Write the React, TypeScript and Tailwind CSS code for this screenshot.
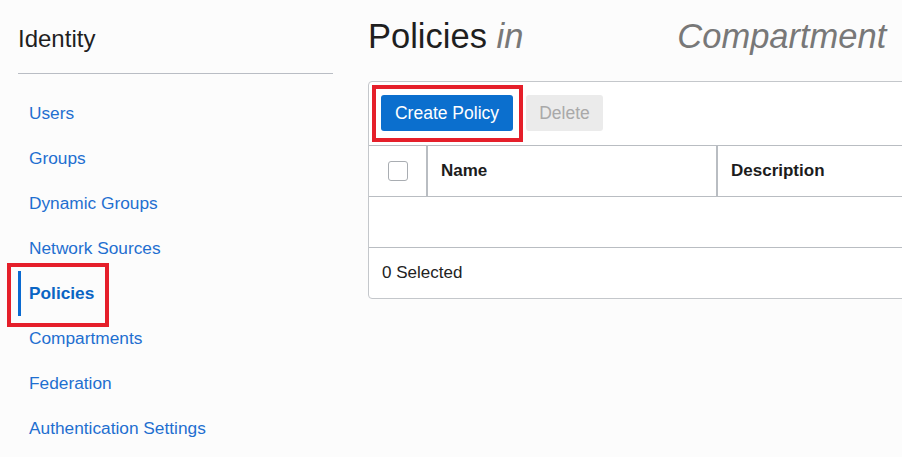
const navItems = [
  "Users",
  "Groups",
  "Dynamic Groups",
  "Network Sources",
  "Policies",
  "Compartments",
  "Federation",
  "Authentication Settings",
];

export default function App() {
  return (
    <div className="flex h-[457px] w-[902px] overflow-hidden bg-[#fcfcfc] font-['Liberation_Sans',Arial,sans-serif]">
      {/* Sidebar */}
      <aside className="ml-[18px] w-[315px] shrink-0">
        <h2 className="pt-[25px] text-[24px] leading-[28px] text-[#1f1f1f]">Identity</h2>
        <div className="mt-[20px] h-px bg-[#b9bdc4]" />
        <ul className="pt-[17px]">
          {navItems.map((item) => {
            const active = item === "Policies";
            return (
              <li key={item} className="relative flex h-[45px] items-center">
                {active ? (
                  <>
                    <span className="flex h-full items-center border-l-[3px] border-[#0b6ad0] pl-[8px] text-[17.3px] font-bold text-[#0a65c4]">
                      {item}
                    </span>
                    <span className="pointer-events-none absolute left-[-11px] top-[-8px] h-[64px] w-[102px] border-4 border-[#e51f2a]" />
                  </>
                ) : (
                  <a className="pl-[11px] text-[17.3px] text-[#1f6fd0]" href="#">
                    {item}
                  </a>
                )}
              </li>
            );
          })}
        </ul>
      </aside>

      {/* Main */}
      <main className="ml-[35px] min-w-0 flex-1">
        <h1 className="whitespace-nowrap pt-[16px] text-[34.5px] leading-[40px] text-[#1f1f1f]">
          Policies <span className="italic text-[#787878]">in</span>
          <span className="inline-block w-[154px]" />
          <span className="italic text-[#787878]">Compartment</span>
        </h1>

        <div className="mt-[25px] w-[620px] rounded-[4px] border border-[#c4c7cb] bg-white">
          {/* Toolbar */}
          <div className="flex gap-[13px] border-b border-[#b9bdc2] pb-[14px] pl-[12px] pt-[13px]">
            <div className="relative">
              <button className="h-[36px] w-[132px] rounded-[3px] bg-[#0b6fce] text-[17.5px] text-white">
                Create Policy
              </button>
              <span className="pointer-events-none absolute left-[-9px] top-[-10px] h-[57px] w-[151px] border-4 border-[#e51f2a]" />
            </div>
            <button className="h-[36px] w-[77px] rounded-[3px] bg-[#ebebeb] text-[17.5px] text-[#a9a9a9]">
              Delete
            </button>
          </div>

          {/* Header */}
          <div className="flex h-[51px] border-b border-[#b9bdc2] text-[17px] font-bold text-[#1c1c1c]">
            <div className="flex w-[59px] items-center justify-center border-r-2 border-[#b9bdc2]">
              <span className="h-[20px] w-[20px] rounded-[3px] border border-[#a9adb2] bg-white" />
            </div>
            <div className="flex w-[290px] items-center border-r-2 border-[#b9bdc2] pl-[13px]">Name</div>
            <div className="flex items-center pl-[13px]">Description</div>
          </div>

          {/* Empty row */}
          <div className="h-[51px] border-b border-[#b9bdc2]" />

          {/* Footer */}
          <div className="flex h-[50px] items-center pl-[13px] text-[17px] text-[#222]">0 Selected</div>
        </div>
      </main>
    </div>
  );
}
